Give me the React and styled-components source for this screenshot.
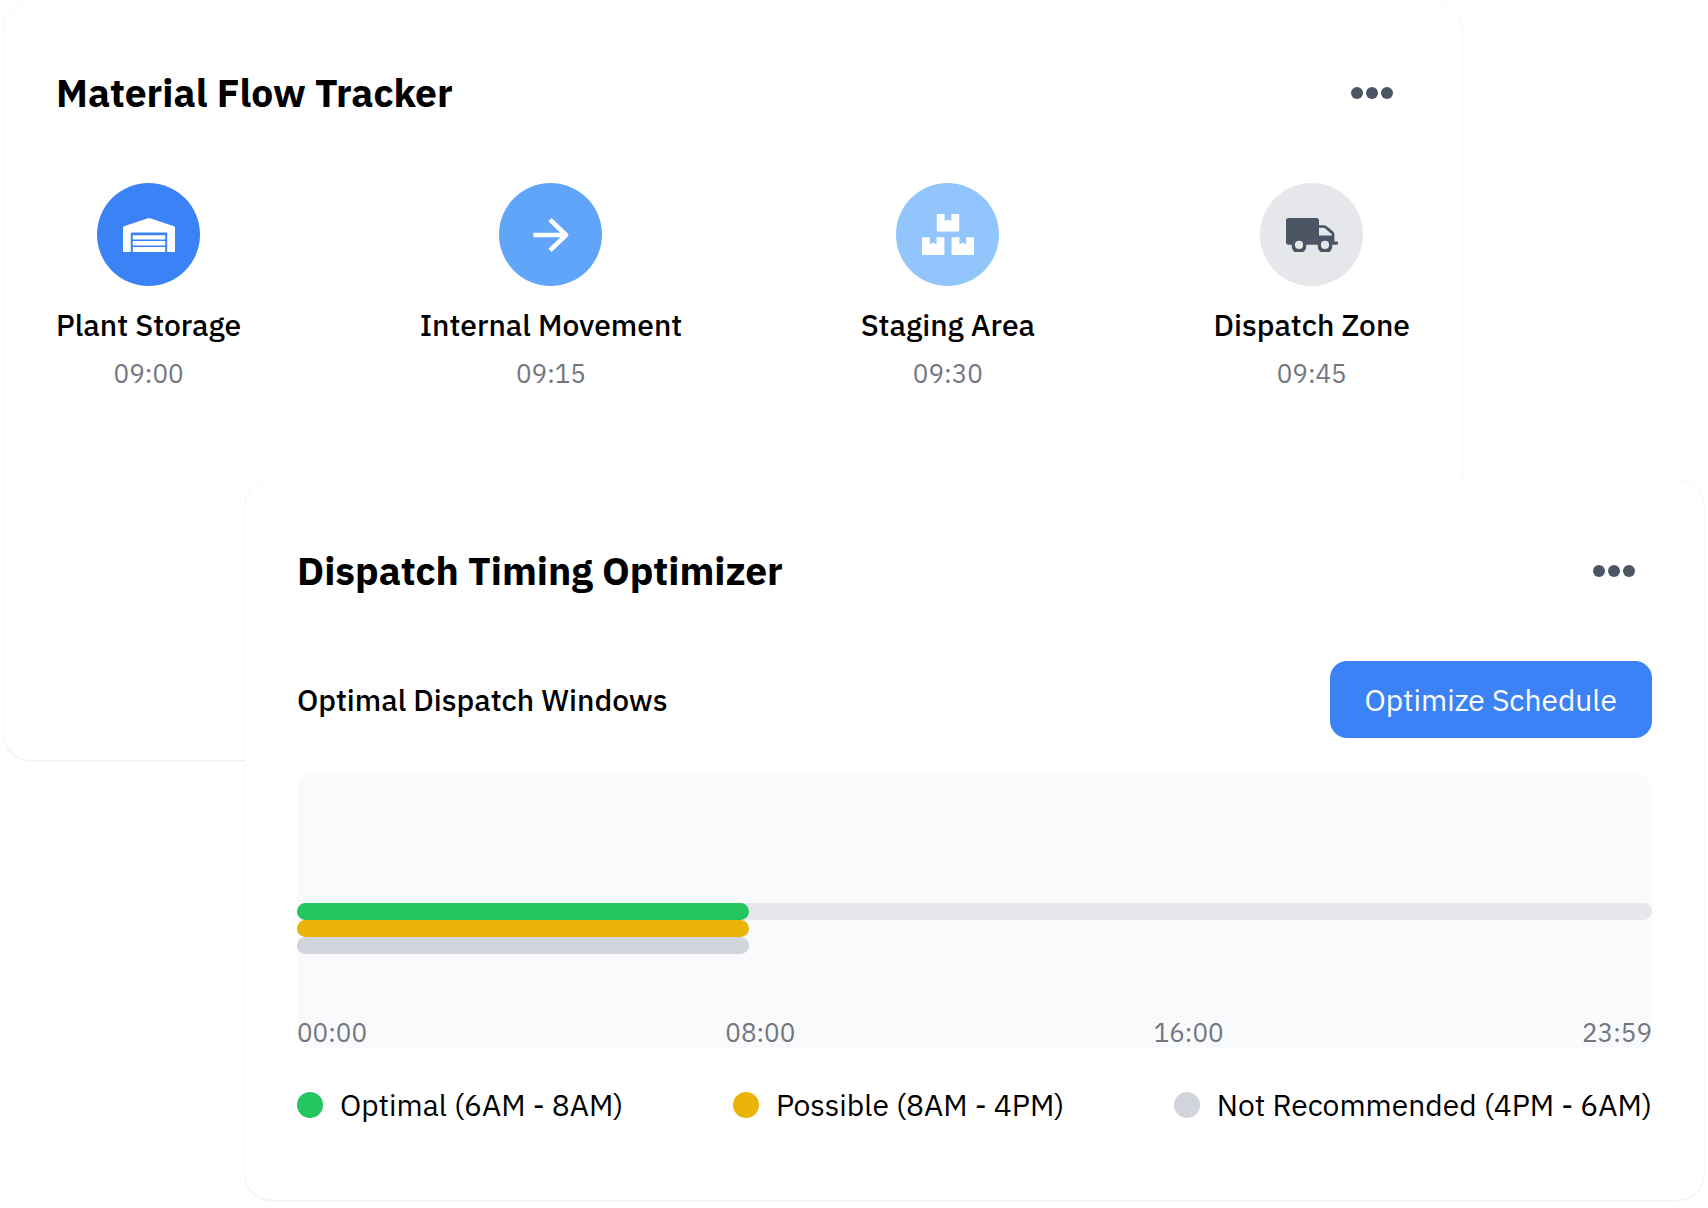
import React from "react";
import styled, {createGlobalStyle} from "styled-components";

const steps = [
    {name: 'Plant Storage', time: '09:00', color: '#3b82f6', icon: <WarehouseIcon/>},
    {name: 'Internal Movement', time: '09:15', color: '#60a5fa', icon: <ArrowIcon/>},
    {name: 'Staging Area', time: '09:30', color: '#93c5fd', icon: <BoxesIcon/>},
    {name: 'Dispatch Zone', time: '09:45', color: '#e5e7eb', icon: <TruckIcon/>},
];

const windows = [
    {label: 'Optimal (6AM - 8AM)', color: '#22c55e', hours: 8},
    {label: 'Possible (8AM - 4PM)', color: '#eab308', hours: 8},
    {label: 'Not Recommended (4PM - 6AM)', color: '#d1d5db', hours: 8},
];

const ticks = ['00:00', '08:00', '16:00', '23:59'];

function WarehouseIcon() {
    return (
        <svg width="52" height="34" viewBox="0 0 52 34" fill="#fff" aria-hidden="true">
            <path d="M0 33.2V9.6Q0 8.6 1 8.2L24.2.4Q26 -.2 27.8.4L51 8.2Q52 8.6 52 9.6V33.2Q52 34 51.2 34H45Q44.2 34 44.2 33.2V15.6Q44.2 14.4 43 14.4H9Q7.8 14.4 7.8 15.6V33.2Q7.8 34 7 34H.8Q0 34 0 33.2Z"/>
            <path d="M9.8 17.2H42.2V21.6H9.8ZM9.8 23H42.2V27.6H9.8ZM9.8 29H42.2V34H9.8Z"/>
        </svg>
    )
}

function ArrowIcon() {
    return (
        <svg width="36" height="36" viewBox="0 0 36 36" fill="none" stroke="#fff" strokeWidth="4.6"
             strokeLinejoin="round" aria-hidden="true">
            <path d="M.4 18H33M17 2.6L33 18L17 33.4"/>
        </svg>
    )
}

function BoxesIcon() {
    return (
        <svg width="52" height="41" viewBox="0 0 52 41" fill="#fff" aria-hidden="true">
            <path d="M15.4 0H22.6V7L26 5.4L29.4 7V0H36.6Q37.2 0 37.2 .6V16.9Q37.2 17.5 36.6 17.5H15.4Q14.8 17.5 14.8 16.9V.6Q14.8 0 15.4 0Z"/>
            <path d="M.6 23.3H7.8V30.3L11.2 28.7L14.6 30.3V23.3H21.8Q22.4 23.3 22.4 23.9V40.4Q22.4 41 21.8 41H.6Q0 41 0 40.4V23.9Q0 23.3 .6 23.3Z"/>
            <path d="M30.2 23.3H37.4V30.3L40.8 28.7L44.2 30.3V23.3H51.4Q52 23.3 52 23.9V40.4Q52 41 51.4 41H30.2Q29.6 41 29.6 40.4V23.9Q29.6 23.3 30.2 23.3Z"/>
        </svg>
    )
}

function TruckIcon() {
    return (
        <svg width="52" height="34" viewBox="0 0 52 34" fill="#4b5563" fillRule="evenodd" aria-hidden="true">
            <path d="M2.5 0H30.5Q33 0 33 2.5V7.3H37.5Q39.5 7.3 41 8.4L46.6 13Q48.4 14.5 48.4 16.5V23.4H51.2Q52 23.4 52 24.2V26Q52 26.8 51.2 26.8H46.2A7.3 7.3 0 1 1 31.8 26.8H20.2A7.3 7.3 0 1 1 5.8 26.8H2.5Q0 26.8 0 24.3V2.5Q0 0 2.5 0ZM33 9.8V17.6H45.8V16.2L39.2 10.6Q38.2 9.8 37 9.8ZM13 22.8A4.1 4.1 0 1 0 13 31A4.1 4.1 0 1 0 13 22.8ZM39 22.8A4.1 4.1 0 1 0 39 31A4.1 4.1 0 1 0 39 22.8Z"/>
        </svg>
    )
}

const MenuButton = () => (
    <IconButton type="button" aria-label="More options">
        <svg width="42" height="12" viewBox="0 0 42 12" fill="#4b5563" aria-hidden="true">
            <circle cx="6" cy="6" r="6"/>
            <circle cx="21" cy="6" r="6"/>
            <circle cx="36" cy="6" r="6"/>
        </svg>
    </IconButton>
)

const FlowTracker = () => (
    <TrackerCard>
        <CardHeader>
            <Title>Material Flow Tracker</Title>
            <MenuButton/>
        </CardHeader>
        <Steps>
            {steps.map(step => (
                <Step key={step.name}>
                    <StepIcon $color={step.color}>{step.icon}</StepIcon>
                    <StepName>{step.name}</StepName>
                    <Time>{step.time}</Time>
                </Step>
            ))}
        </Steps>
    </TrackerCard>
)

const TimingOptimizer = () => (
    <OptimizerCard>
        <CardHeader>
            <Title>Dispatch Timing Optimizer</Title>
            <MenuButton/>
        </CardHeader>
        <Toolbar>
            <Subtitle>Optimal Dispatch Windows</Subtitle>
            <PrimaryButton type="button">Optimize Schedule</PrimaryButton>
        </Toolbar>
        <Chart>
            <Bars>
                {windows.map((item, i) => (
                    <Track key={item.label} $filled={i === 0}>
                        <Bar $color={item.color} style={{width: `${item.hours / 24 * 100}%`}}/>
                    </Track>
                ))}
            </Bars>
            <Axis>
                {ticks.map(tick => <Time key={tick}>{tick}</Time>)}
            </Axis>
        </Chart>
        <Legend>
            {windows.map(item => (
                <LegendItem key={item.label}>
                    <Dot $color={item.color}/>
                    {item.label}
                </LegendItem>
            ))}
        </Legend>
    </OptimizerCard>
)

const App = () => {
    return (
        <>
            <GlobalStyle/>
            <Page>
                <FlowTracker/>
                <TimingOptimizer/>
            </Page>
        </>
    )
}

const GlobalStyle = createGlobalStyle`
  * {
    box-sizing: border-box;
    margin: 0;
    padding: 0;
  }

  body {
    background: #fff;
    color: #000;
    font-family: "IBM Plex Sans", "Noto Sans", sans-serif;
    font-size: 30px;
    line-height: 43px;
  }

  ul, ol {
    list-style: none;
  }
`;

const Page = styled.main`
  display: flex;
  flex-direction: column;
  padding: 2px 4px 6px;
`;

const Card = styled.section`
  padding: 52px;
  border-radius: 26px;
  background: #fff;
  box-shadow: 0 0 1px rgba(0, 0, 0, 0.12), 0 1px 2px rgba(0, 0, 0, 0.06);
`;

const TrackerCard = styled(Card)`
  min-height: 758px;
  margin-right: 242px;
`;

/* overlaps the lower right part of the tracker */
const OptimizerCard = styled(Card)`
  position: relative;
  margin: -280px 0 0 241px;
  padding-bottom: 74px;
`;

const CardHeader = styled.header`
  display: flex;
  align-items: center;
  justify-content: space-between;
  margin-bottom: 52px;
`;

const Title = styled.h2`
  font-size: 39px;
  font-weight: 700;
  line-height: 60px;
`;

const IconButton = styled.button`
  display: flex;
  align-items: center;
  justify-content: center;
  width: 77px;
  height: 77px;
  border: 0;
  background: none;
  cursor: pointer;
`;

const Steps = styled.ol`
  display: flex;
  justify-content: space-between;
`;

const Step = styled.li`
  display: flex;
  flex-direction: column;
  align-items: center;
`;

const StepIcon = styled.div`
  display: flex;
  align-items: center;
  justify-content: center;
  width: 103px;
  height: 103px;
  margin-bottom: 17px;
  border-radius: 50%;
  background: ${({$color}) => $color};
`;

const StepName = styled.h3`
  margin-bottom: 10px;
  font-size: 30px;
  font-weight: 500;
`;

const Time = styled.span`
  font-size: 26px;
  line-height: 34px;
  color: #73767f;
`;

const Toolbar = styled.div`
  display: flex;
  align-items: center;
  justify-content: space-between;
  margin-bottom: 35px;
`;

const Subtitle = styled.h3`
  font-size: 30px;
  font-weight: 500;
`;

const PrimaryButton = styled.button`
  height: 77px;
  padding: 0 35px;
  border: 0;
  border-radius: 17px;
  background: #3b82f6;
  color: #fff;
  font: inherit;
  cursor: pointer;
`;

const Chart = styled.div`
  display: flex;
  flex-direction: column;
  justify-content: space-between;
  min-height: 276px;
  padding-top: 130px;
  border-radius: 17px;
  background: #f9fafb;
`;

const Bars = styled.div`
  display: flex;
  flex-direction: column;
`;

const Track = styled.div`
  border-radius: 9px;
  background: ${({$filled}) => $filled ? '#e5e7eb' : 'transparent'};
`;

const Bar = styled.div`
  height: 17px;
  border-radius: 9px;
  background: ${({$color}) => $color};
`;

const Axis = styled.div`
  display: flex;
  justify-content: space-between;
`;

const Legend = styled.ul`
  display: flex;
  justify-content: space-between;
  margin-top: 34px;
`;

const LegendItem = styled.li`
  display: flex;
  align-items: center;
  gap: 17px;
`;

const Dot = styled.span`
  width: 26px;
  height: 26px;
  border-radius: 50%;
  background: ${({$color}) => $color};
`;

export default App;
